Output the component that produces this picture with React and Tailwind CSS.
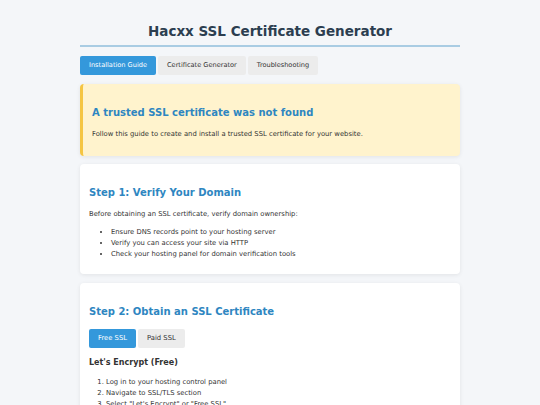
import { useState } from "react";

function Card({ children }) {
  return (
    <div className="bg-white rounded-[4px] shadow-[0_1px_4px_rgba(0,0,0,0.08)] px-[9px] pt-[9px] pb-[9px] mb-[9px]">
      {children}
    </div>
  );
}

export default function App() {
  const [tab, setTab] = useState(0);
  const [ssl, setSsl] = useState(0);
  const tabs = ["Installation Guide", "Certificate Generator", "Troubleshooting"];

  return (
    <div className="min-h-screen bg-[#f4f6f9] text-[#333] font-['DejaVu_Sans',sans-serif]">
      <div className="w-[380px] mx-auto pt-[21px]">
        <h1 className="text-center text-[13.5px] leading-[20px] font-bold text-[#2c3e50] pb-[4px] border-b-2 border-[#a9cce3]">
          Hacxx SSL Certificate Generator
        </h1>

        <div className="flex gap-[2px] mt-[9px] mb-[9px]">
          {tabs.map((t, i) => (
            <button
              key={t}
              onClick={() => setTab(i)}
              className={
                "h-[19px] px-[9px] text-[6.6px] rounded-[2px] " +
                (tab === i ? "bg-[#3498db] text-white" : "bg-[#ececec] text-[#333]")
              }
            >
              {t}
            </button>
          ))}
        </div>

        <div className="bg-[#fff3cd] border-l-[3px] border-[#f5c542] rounded-[4px] shadow-[0_1px_4px_rgba(0,0,0,0.08)] px-[9px] pt-[9px] pb-[9px] mb-[8px]">
          <h2 className="mt-[13px] text-[10px] leading-[14px] font-bold text-[#2e86c1]">
            A trusted SSL certificate was not found
          </h2>
          <p className="mt-[9px] mb-[7px] text-[6.8px] leading-[11px]">
            Follow this guide to create and install a trusted SSL certificate for your website.
          </p>
        </div>

        <Card>
          <h2 className="mt-[13px] text-[10px] leading-[14px] font-bold text-[#2e86c1]">
            Step 1: Verify Your Domain
          </h2>
          <p className="mt-[9px] text-[6.8px] leading-[11px]">
            Before obtaining an SSL certificate, verify domain ownership:
          </p>
          <ul className="mt-[7px] mb-[5px] pl-[22px] list-disc text-[6.8px] leading-[11px]">
            <li>Ensure DNS records point to your hosting server</li>
            <li>Verify you can access your site via HTTP</li>
            <li>Check your hosting panel for domain verification tools</li>
          </ul>
        </Card>

        <Card>
          <h2 className="mt-[13px] text-[10px] leading-[14px] font-bold text-[#2e86c1]">
            Step 2: Obtain an SSL Certificate
          </h2>
          <div className="flex gap-[2px] mt-[10px]">
            {["Free SSL", "Paid SSL"].map((t, i) => (
              <button
                key={t}
                onClick={() => setSsl(i)}
                className={
                  "h-[19px] px-[9px] text-[6.8px] rounded-[2px] " +
                  (ssl === i ? "bg-[#3498db] text-white" : "bg-[#ececec] text-[#333]")
                }
              >
                {t}
              </button>
            ))}
          </div>
          <h3 className="mt-[9px] text-[8px] leading-[12px] font-bold text-[#333]">
            Let's Encrypt (Free)
          </h3>
          <ol className="mt-[8px] pl-[17px] list-decimal text-[6.8px] leading-[11px]">
            <li>Log in to your hosting control panel</li>
            <li>Navigate to SSL/TLS section</li>
            <li>Select "Let's Encrypt" or "Free SSL"</li>
            <li>Enter your domain name and click Install</li>
          </ol>
        </Card>
      </div>
    </div>
  );
}
